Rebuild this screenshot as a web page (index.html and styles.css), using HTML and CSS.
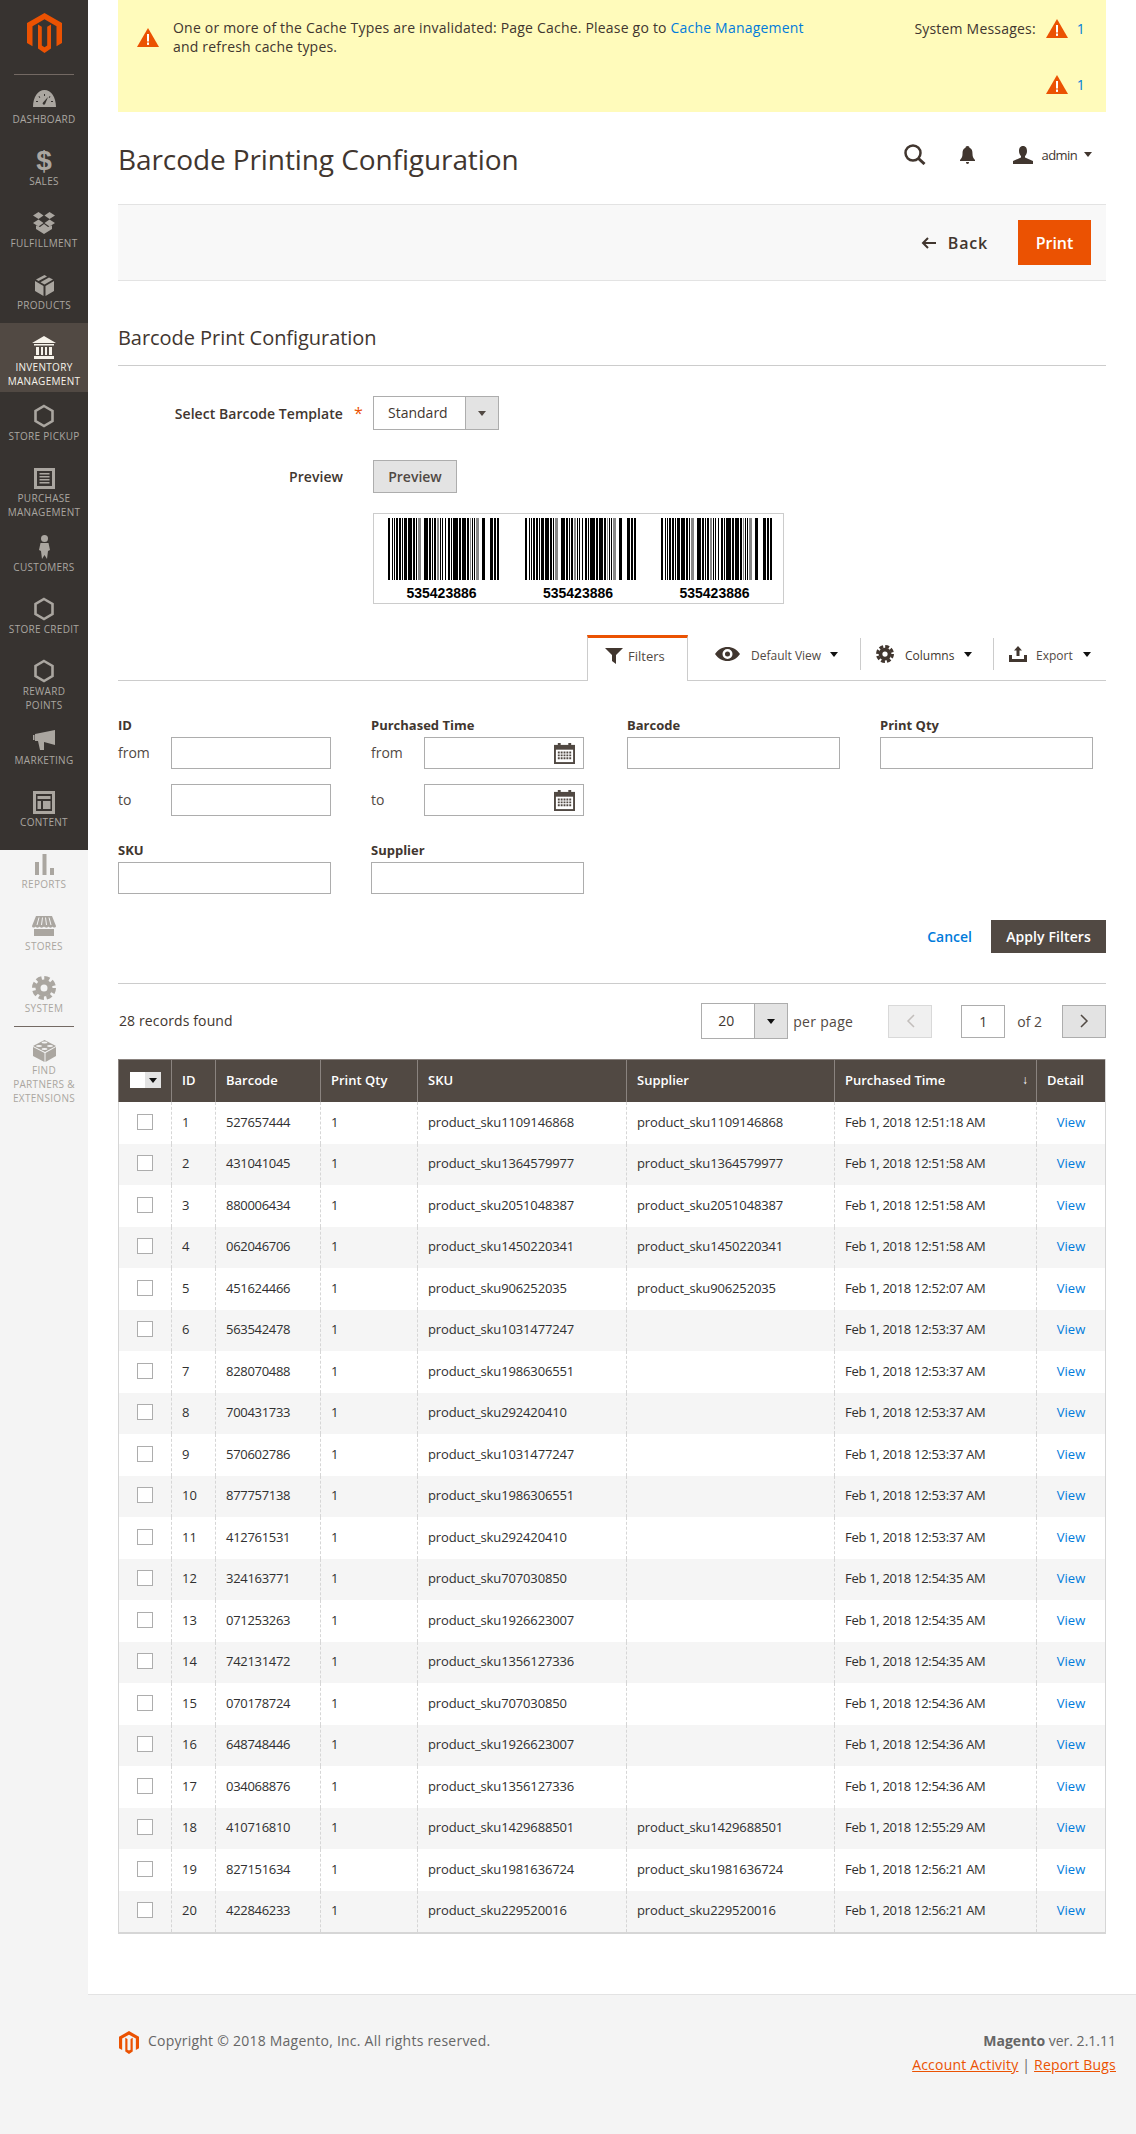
FILE: index.html
```html
<!DOCTYPE html>
<html lang="en">
<head>
  <meta charset="UTF-8">
  <title>Barcode Printing Configuration</title>
  <link rel="stylesheet" href="styles.css">
</head>
<body>
  <!-- shared icons -->
  <svg class="defs" aria-hidden="true">
    <symbol id="logo" viewBox="0 0 35 40">
      <polygon points="17.5,0 35,10 35,30 29.5,33.2 29.5,13.2 17.5,6.3 5.5,13.2 5.5,33.2 0,30 0,10"/>
      <polygon points="24,11.5 20.2,13.7 20.2,32.6 17.5,34.2 14.8,32.6 14.8,13.7 11,11.5 11,35.6 17.5,40 24,35.6"/>
    </symbol>
    <symbol id="warn" viewBox="0 0 22 19">
      <polygon points="11,0 22,19 0,19" fill="#eb5202"/>
      <rect x="10" y="6" width="2" height="7.500" fill="#fff"/>
      <rect x="10" y="14.5" width="2" height="2.400" fill="#fff"/>
    </symbol>
    <symbol id="hexagon" viewBox="0 0 24 24">
      <polygon points="12,2 20.5,7 20.5,17 12,22 3.5,17 3.5,7" fill="none" stroke="currentColor" stroke-width="2.6"/>
    </symbol>
    <symbol id="gear" viewBox="0 0 24 24">
      <circle cx="12" cy="12" r="6" fill="none" stroke="currentColor" stroke-width="5"/>
      <circle cx="12" cy="12" r="10" fill="none" stroke="currentColor" stroke-width="4" stroke-dasharray="5.2 2.65"/>
    </symbol>
    <symbol id="calendar" viewBox="0 0 22 22">
      <rect x="1" y="3" width="20" height="18" fill="none" stroke="#514943" stroke-width="2"/>
      <rect x="1" y="3" width="20" height="4" fill="#514943"/>
      <rect x="4" y="0" width="3" height="5" fill="#514943"/>
      <rect x="15" y="0" width="3" height="5" fill="#514943"/>
      <path d="M4 10h14M4 13h14M4 16h14" stroke="#514943" stroke-width="2" stroke-dasharray="2 1"/>
    </symbol>
    <symbol id="bars" viewBox="0 0 111 62">
      <path d="M0 0h2v62H0zM4 0h1v62H4zM6 0h1v62H6zM8 0h2v62H8zM11 0h2v62h-2zM14 0h1v62h-1zM16 0h3v62h-3zM20 0h4v62h-4zM25 0h2v62h-2zM28 0h1v62h-1zM36 0h4v62h-4zM41 0h2v62h-2zM44 0h1v62h-1zM46 0h2v62h-2zM52 0h1v62h-1zM54 0h1v62h-1zM57 0h1v62h-1zM60 0h2v62h-2zM63 0h1v62h-1zM65 0h5v62h-5zM71 0h2v62h-2zM74 0h4v62h-4zM79 0h2v62h-2zM84 0h1v62h-1zM86 0h1v62h-1zM94 0h3v62h-3zM102 0h3v62h-3zM106 0h2v62h-2zM109 0h2v62h-2z" shape-rendering="crispEdges"/>
      <path d="M30 0h3v62h-3zM49 0h2v62h-2zM82 0h1v62h-1zM88 0h3v62h-3z" fill="#888" shape-rendering="crispEdges"/>
    </symbol>
  </svg>

  <nav class="sidebar">
    <div class="sidebar-dark">
      <div class="logo-block">
        <svg class="logo"><use href="#logo"/></svg>
      </div>
      <a class="nav-item">
        <span class="nav-icon">
          <svg width="23" height="18" viewBox="0 0 23 18"><path d="M0 17C0 7 5 0 11.5 0S23 7 23 17zM11 4v2h1V4zM5.5 6.5l1 1.5 .8-.6-1-1.500zM17.500 6.500l-1 1.500-.8-.6 1-1.500zM3 11v1h2v-1zM18 11v1h2v-1zM15 7l-5 5.500c-1.200 1.300 .8 3 2 1.700z" fill-rule="evenodd"/></svg>
        </span>
        <span class="nav-label">Dashboard</span>
      </a>
      <a class="nav-item">
        <span class="nav-icon nav-dollar">$</span>
        <span class="nav-label">Sales</span>
      </a>
      <a class="nav-item">
        <span class="nav-icon">
          <svg width="22" height="22" viewBox="0 0 22 22"><path d="M5.500 0L10.500 3.500 5.500 7 0 3.500zM16.500 0L22 3.500 16.500 7 11.500 3.500zM5.500 7.500L10.500 11 5.500 14.500 0 11zM16.500 7.500L22 11 16.500 14.500 11.500 11zM11 12L15 15 19 13.500V17L11 22 3 17V13.500L7 15z"/></svg>
        </span>
        <span class="nav-label">Fulfillment</span>
      </a>
      <a class="nav-item">
        <span class="nav-icon">
          <svg width="19" height="21" viewBox="0 0 19 21"><path d="M0 6L8.500 11V21L0 16zM19 6V16L10.500 21V11zM9.500 0L12 1.400 3.500 6 1 4.600zM14 2.600L18 4.600 9.500 9.500 5.500 7.200z"/></svg>
        </span>
        <span class="nav-label">Products</span>
      </a>
      <a class="nav-item nav-item-active">
        <span class="nav-icon">
          <svg width="24" height="23" viewBox="0 0 24 23"><path d="M12 0L24 7H0zM2 8H22V9.500H2zM4 11H7V19H4zM9 11H11V19H9zM13 11H15V19H13zM17 11H20V19H17zM2 20H22V23H2z"/></svg>
        </span>
        <span class="nav-label">Inventory Management</span>
      </a>
      <a class="nav-item">
        <span class="nav-icon"><svg width="24" height="24"><use href="#hexagon"/></svg></span>
        <span class="nav-label">Store Pickup</span>
      </a>
      <a class="nav-item">
        <span class="nav-icon">
          <svg width="21" height="21" viewBox="0 0 21 21"><path d="M0 0H21V21H0zM3 3V18H18V3zM5.500 5H15.500V6.500H5.500zM5.500 8H15.500V9.500H5.500zM5.500 11H15.500V12.500H5.500zM5.500 14H15.500V15.500H5.500z" fill-rule="evenodd"/></svg>
        </span>
        <span class="nav-label">Purchase Management</span>
      </a>
      <a class="nav-item">
        <span class="nav-icon">
          <svg width="11" height="24" viewBox="0 0 11 24"><circle cx="5.500" cy="3.500" r="3.500"/><path d="M1.500 8H9.500L11 15 9 16 8 24 5.500 20 3 24 2 16 0 15z"/></svg>
        </span>
        <span class="nav-label">Customers</span>
      </a>
      <a class="nav-item">
        <span class="nav-icon"><svg width="24" height="24"><use href="#hexagon"/></svg></span>
        <span class="nav-label">Store Credit</span>
      </a>
      <a class="nav-item">
        <span class="nav-icon"><svg width="24" height="24"><use href="#hexagon"/></svg></span>
        <span class="nav-label">Reward Points</span>
      </a>
      <a class="nav-item">
        <span class="nav-icon">
          <svg width="22" height="20" viewBox="0 0 22 20"><path d="M22 0V15L11 12 11 20 7 20 5 11 2 11V4zM0 5H1.500V10H0z"/></svg>
        </span>
        <span class="nav-label">Marketing</span>
      </a>
      <a class="nav-item">
        <span class="nav-icon">
          <svg width="22" height="23" viewBox="0 0 22 23"><path d="M0 0H22V23H0zM3 3V20H19V3zM4.500 5H17.500V8H4.500zM4.500 10H8V18H4.500zM10 10H17.500V18H10z" fill-rule="evenodd"/></svg>
        </span>
        <span class="nav-label">Content</span>
      </a>
    </div>
    <div class="sidebar-light">
      <a class="nav-item nav-item-first">
        <span class="nav-icon">
          <svg width="19" height="21" viewBox="0 0 19 21"><path d="M0 8H4V21H0zM7.500 0H11.500V21H7.500zM15 14H19V21H15z"/></svg>
        </span>
        <span class="nav-label">Reports</span>
      </a>
      <a class="nav-item">
        <span class="nav-icon">
          <svg width="24" height="20" viewBox="0 0 24 20"><path d="M4 0H20L24 10C24 12 21 12 20.500 10.500 20 12 17 12 16.500 10.500 16 12 13 12 12 10.500 11 12 8 12 7.500 10.500 7 12 4 12 3.500 10.500 3 12 0 12 0 10zM2 13H22V20H2z"/><path d="M7 1.500L5 9M10.500 1.500L9.500 9M13.500 1.500L14.500 9M17 1.500L19 9" stroke="#f4f4f4" fill="none"/></svg>
        </span>
        <span class="nav-label">Stores</span>
      </a>
      <a class="nav-item">
        <span class="nav-icon"><svg width="24" height="24"><use href="#gear"/></svg></span>
        <span class="nav-label">System</span>
      </a>
      <div class="nav-divider"></div>
      <a class="nav-item">
        <span class="nav-icon">
          <svg width="23" height="24" viewBox="0 0 23 24"><path d="M0 9L11.500 15V24L0 18zM23 9V18L12.500 24V15z"/><path d="M11.500 2L23 8 12 14 0 8z"/><g fill="#f4f4f4"><ellipse cx="11.500" cy="4.500" rx="3" ry="1"/><ellipse cx="6" cy="8" rx="3" ry="1"/><ellipse cx="17" cy="8" rx="3" ry="1"/><ellipse cx="11.500" cy="11" rx="3" ry="1"/></g></svg>
        </span>
        <span class="nav-label">Find Partners &amp; Extensions</span>
      </a>
    </div>
  </nav>

  <div class="main">
    <div class="page">
      <div class="notice">
        <div class="notice-message">
          <svg class="warn-icon"><use href="#warn"/></svg>
          <p>One or more of the Cache Types are invalidated: Page Cache. Please go to <a href="#">Cache Management</a> and refresh cache types.</p>
        </div>
        <div class="notice-counts">
          <div class="notice-count">
            <span class="notice-count-label">System Messages:</span>
            <svg class="warn-icon"><use href="#warn"/></svg>
            <a href="#">1</a>
          </div>
          <div class="notice-count">
            <svg class="warn-icon"><use href="#warn"/></svg>
            <a href="#">1</a>
          </div>
        </div>
      </div>

      <div class="title-row">
        <h1>Barcode Printing Configuration</h1>
        <div class="user-tools">
          <svg class="search-icon" width="22" height="21" viewBox="0 0 22 21"><circle cx="9" cy="9" r="7.500" fill="none" stroke="#41362f" stroke-width="2.500"/><path d="M14.500 14.500L20.500 20" stroke="#41362f" stroke-width="3"/></svg>
          <svg class="bell-icon" width="15" height="18" viewBox="0 0 15 18"><path d="M7.500 0C9 0 9.500 1 9.500 1.800 12 2.700 12.500 5 12.500 8 12.500 11 13.500 12.500 15 14V15H0V14C1.500 12.500 2.500 11 2.500 8 2.500 5 3 2.700 5.500 1.800 5.500 1 6 0 7.500 0zM6 16H9C9 17 8.500 18 7.500 18S6 17 6 16z" fill="#41362f"/></svg>
          <svg class="user-icon" width="20" height="18" viewBox="0 0 20 18"><path d="M10 0C13 0 14 2.500 14 5 14 7.500 13 9 12 10V11.500L20 15V18H0V15L8 11.500V10C7 9 6 7.500 6 5 6 2.500 7 0 10 0z" fill="#41362f"/></svg>
          <span class="user-name">admin</span>
          <span class="caret caret-dark"></span>
        </div>
      </div>

      <div class="action-bar">
        <a class="back-link">
          <svg width="15" height="12" viewBox="0 0 15 12"><path d="M15 6H2M7 1L2 6 7 11" fill="none" stroke="#41362f" stroke-width="2"/></svg>
          Back
        </a>
        <button class="btn-print">Print</button>
      </div>

      <h2 class="section-title">Barcode Print Configuration</h2>

      <div class="config-row">
        <label class="config-label">Select Barcode Template</label>
        <span class="config-star">*</span>
        <div class="select-box select-template">
          <span class="select-value">Standard</span>
          <span class="select-arrow"><span class="caret"></span></span>
        </div>
      </div>
      <div class="config-row config-row-preview">
        <label class="config-label">Preview</label>
        <span class="config-star"></span>
        <button class="btn-grey">Preview</button>
      </div>
      <div class="barcode-box">
        <div class="barcode">
          <svg width="111" height="62"><use href="#bars"/></svg>
          <span>535423886</span>
        </div>
        <div class="barcode">
          <svg width="111" height="62"><use href="#bars"/></svg>
          <span>535423886</span>
        </div>
        <div class="barcode">
          <svg width="111" height="62"><use href="#bars"/></svg>
          <span>535423886</span>
        </div>
      </div>

      <div class="grid-tools">
        <a class="tab-filters">
          <svg width="18" height="16" viewBox="0 0 18 16"><path d="M0 0H18L11 7V16L7 13V7z" fill="#41362f"/></svg>
          Filters
        </a>
        <a class="tool tool-view">
          <svg width="25" height="14" viewBox="0 0 25 14"><path d="M0 7C3 2.500 7.500 0 12.500 0S22 2.500 25 7C22 11.500 17.500 14 12.500 14S3 11.500 0 7zM12.500 2A5 5 0 1 0 12.500 12 5 5 0 1 0 12.500 2zM12.500 4.500A2.500 2.500 0 1 1 12.500 9.500 2.500 2.500 0 1 1 12.500 4.500z" fill="#41362f" fill-rule="evenodd"/></svg>
          <span class="tool-label">Default View</span>
          <span class="caret caret-black"></span>
        </a>
        <a class="tool tool-columns">
          <svg class="tool-gear" width="18" height="18"><use href="#gear"/></svg>
          <span class="tool-label">Columns</span>
          <span class="caret caret-black"></span>
        </a>
        <a class="tool tool-export">
          <svg width="18" height="16" viewBox="0 0 18 16"><path d="M9 0L13 4.500H10.500V10H7.500V4.500H5zM0 9H3V13H15V9H18V16H0z" fill="#41362f"/></svg>
          <span class="tool-label">Export</span>
          <span class="caret caret-black"></span>
        </a>
      </div>

      <div class="filters">
        <div class="filter-col">
          <div class="filter-label">ID</div>
          <div class="range-row"><span class="range-label">from</span><input class="text-input range-input" type="text"></div>
          <div class="range-row"><span class="range-label">to</span><input class="text-input range-input" type="text"></div>
        </div>
        <div class="filter-col">
          <div class="filter-label">Purchased Time</div>
          <div class="range-row">
            <span class="range-label">from</span>
            <div class="date-box"><svg width="21" height="21"><use href="#calendar"/></svg></div>
          </div>
          <div class="range-row">
            <span class="range-label">to</span>
            <div class="date-box"><svg width="21" height="21"><use href="#calendar"/></svg></div>
          </div>
        </div>
        <div class="filter-col">
          <div class="filter-label">Barcode</div>
          <input class="text-input" type="text">
        </div>
        <div class="filter-col">
          <div class="filter-label">Print Qty</div>
          <input class="text-input" type="text">
        </div>
        <div class="filter-col filter-second-row">
          <div class="filter-label">SKU</div>
          <input class="text-input" type="text">
        </div>
        <div class="filter-col filter-second-row">
          <div class="filter-label">Supplier</div>
          <input class="text-input" type="text">
        </div>
      </div>

      <div class="filter-actions">
        <a class="cancel-link" href="#">Cancel</a>
        <button class="btn-apply">Apply Filters</button>
      </div>

      <div class="pager">
        <span class="records">28 records found</span>
        <div class="select-box select-perpage">
          <span class="select-value">20</span>
          <span class="select-arrow"><span class="caret caret-black"></span></span>
        </div>
        <span class="per-page">per page</span>
        <button class="page-btn page-btn-disabled">
          <svg width="9" height="14" viewBox="0 0 9 14"><path d="M8 1L2 7 8 13" fill="none" stroke="#c2bebb" stroke-width="1.500"/></svg>
        </button>
        <input class="page-input" type="text" value="1">
        <span class="page-total">of 2</span>
        <button class="page-btn">
          <svg width="9" height="14" viewBox="0 0 9 14"><path d="M1 1L7 7 1 13" fill="none" stroke="#514943" stroke-width="1.500"/></svg>
        </button>
      </div>

      <table class="grid">
        <colgroup>
          <col class="col-check"><col class="col-id"><col class="col-barcode"><col class="col-qty">
          <col class="col-sku"><col class="col-supplier"><col class="col-time"><col class="col-detail">
        </colgroup>
        <thead>
          <tr>
            <th class="check-cell"><span class="mass-check"><span class="mass-box"></span><span class="mass-arrow"><span class="caret caret-black"></span></span></span></th>
            <th>ID</th><th>Barcode</th><th>Print Qty</th><th>SKU</th><th>Supplier</th>
            <th>Purchased Time<span class="sort-arrow">↓</span></th>
            <th>Detail</th>
          </tr>
        </thead>
        <tbody>
          <tr><td class="check-cell"><span class="checkbox"></span></td><td>1</td><td>527657444</td><td>1</td><td>product_sku1109146868</td><td>product_sku1109146868</td><td>Feb 1, 2018 12:51:18 AM</td><td class="view-cell"><a href="#">View</a></td></tr>
          <tr><td class="check-cell"><span class="checkbox"></span></td><td>2</td><td>431041045</td><td>1</td><td>product_sku1364579977</td><td>product_sku1364579977</td><td>Feb 1, 2018 12:51:58 AM</td><td class="view-cell"><a href="#">View</a></td></tr>
          <tr><td class="check-cell"><span class="checkbox"></span></td><td>3</td><td>880006434</td><td>1</td><td>product_sku2051048387</td><td>product_sku2051048387</td><td>Feb 1, 2018 12:51:58 AM</td><td class="view-cell"><a href="#">View</a></td></tr>
          <tr><td class="check-cell"><span class="checkbox"></span></td><td>4</td><td>062046706</td><td>1</td><td>product_sku1450220341</td><td>product_sku1450220341</td><td>Feb 1, 2018 12:51:58 AM</td><td class="view-cell"><a href="#">View</a></td></tr>
          <tr><td class="check-cell"><span class="checkbox"></span></td><td>5</td><td>451624466</td><td>1</td><td>product_sku906252035</td><td>product_sku906252035</td><td>Feb 1, 2018 12:52:07 AM</td><td class="view-cell"><a href="#">View</a></td></tr>
          <tr><td class="check-cell"><span class="checkbox"></span></td><td>6</td><td>563542478</td><td>1</td><td>product_sku1031477247</td><td></td><td>Feb 1, 2018 12:53:37 AM</td><td class="view-cell"><a href="#">View</a></td></tr>
          <tr><td class="check-cell"><span class="checkbox"></span></td><td>7</td><td>828070488</td><td>1</td><td>product_sku1986306551</td><td></td><td>Feb 1, 2018 12:53:37 AM</td><td class="view-cell"><a href="#">View</a></td></tr>
          <tr><td class="check-cell"><span class="checkbox"></span></td><td>8</td><td>700431733</td><td>1</td><td>product_sku292420410</td><td></td><td>Feb 1, 2018 12:53:37 AM</td><td class="view-cell"><a href="#">View</a></td></tr>
          <tr><td class="check-cell"><span class="checkbox"></span></td><td>9</td><td>570602786</td><td>1</td><td>product_sku1031477247</td><td></td><td>Feb 1, 2018 12:53:37 AM</td><td class="view-cell"><a href="#">View</a></td></tr>
          <tr><td class="check-cell"><span class="checkbox"></span></td><td>10</td><td>877757138</td><td>1</td><td>product_sku1986306551</td><td></td><td>Feb 1, 2018 12:53:37 AM</td><td class="view-cell"><a href="#">View</a></td></tr>
          <tr><td class="check-cell"><span class="checkbox"></span></td><td>11</td><td>412761531</td><td>1</td><td>product_sku292420410</td><td></td><td>Feb 1, 2018 12:53:37 AM</td><td class="view-cell"><a href="#">View</a></td></tr>
          <tr><td class="check-cell"><span class="checkbox"></span></td><td>12</td><td>324163771</td><td>1</td><td>product_sku707030850</td><td></td><td>Feb 1, 2018 12:54:35 AM</td><td class="view-cell"><a href="#">View</a></td></tr>
          <tr><td class="check-cell"><span class="checkbox"></span></td><td>13</td><td>071253263</td><td>1</td><td>product_sku1926623007</td><td></td><td>Feb 1, 2018 12:54:35 AM</td><td class="view-cell"><a href="#">View</a></td></tr>
          <tr><td class="check-cell"><span class="checkbox"></span></td><td>14</td><td>742131472</td><td>1</td><td>product_sku1356127336</td><td></td><td>Feb 1, 2018 12:54:35 AM</td><td class="view-cell"><a href="#">View</a></td></tr>
          <tr><td class="check-cell"><span class="checkbox"></span></td><td>15</td><td>070178724</td><td>1</td><td>product_sku707030850</td><td></td><td>Feb 1, 2018 12:54:36 AM</td><td class="view-cell"><a href="#">View</a></td></tr>
          <tr><td class="check-cell"><span class="checkbox"></span></td><td>16</td><td>648748446</td><td>1</td><td>product_sku1926623007</td><td></td><td>Feb 1, 2018 12:54:36 AM</td><td class="view-cell"><a href="#">View</a></td></tr>
          <tr><td class="check-cell"><span class="checkbox"></span></td><td>17</td><td>034068876</td><td>1</td><td>product_sku1356127336</td><td></td><td>Feb 1, 2018 12:54:36 AM</td><td class="view-cell"><a href="#">View</a></td></tr>
          <tr><td class="check-cell"><span class="checkbox"></span></td><td>18</td><td>410716810</td><td>1</td><td>product_sku1429688501</td><td>product_sku1429688501</td><td>Feb 1, 2018 12:55:29 AM</td><td class="view-cell"><a href="#">View</a></td></tr>
          <tr><td class="check-cell"><span class="checkbox"></span></td><td>19</td><td>827151634</td><td>1</td><td>product_sku1981636724</td><td>product_sku1981636724</td><td>Feb 1, 2018 12:56:21 AM</td><td class="view-cell"><a href="#">View</a></td></tr>
          <tr><td class="check-cell"><span class="checkbox"></span></td><td>20</td><td>422846233</td><td>1</td><td>product_sku229520016</td><td>product_sku229520016</td><td>Feb 1, 2018 12:56:21 AM</td><td class="view-cell"><a href="#">View</a></td></tr>
        </tbody>
      </table>
    </div>

    <footer class="footer">
      <div class="footer-left">
        <svg class="footer-logo"><use href="#logo"/></svg>
        <span>Copyright © 2018 Magento, Inc. All rights reserved.</span>
      </div>
      <div class="footer-right">
        <div class="footer-version"><strong>Magento</strong> ver. 2.1.11</div>
        <div class="footer-links"><a href="#">Account Activity</a> | <a href="#">Report Bugs</a></div>
      </div>
    </footer>
  </div>
</body>
</html>
```

FILE: styles.css
```css
* {
  box-sizing: border-box;
}
body {
  margin: 0;
  min-height: 2134px;
  display: flex;
  font-family: "Open Sans", sans-serif;
  font-size: 14px;
  color: #41362f;
  background: #fff;
}
a {
  text-decoration: none;
}
button {
  font-family: inherit;
  cursor: pointer;
}
.defs {
  display: none;
}

/* Sidebar */
.sidebar {
  width: 88px;
  flex: none;
  background: #f4f4f4;
  color: #aaa6a0;
}
.sidebar-dark {
  height: 850px;
  background: #373330;
}
.logo-block {
  height: 75px;
  width: 60px;
  margin: 0 auto;
  padding-top: 13px;
  border-bottom: 1px solid #736963;
  text-align: center;
}
.logo {
  width: 35px;
  height: 40px;
  fill: #eb5202;
}
.nav-item {
  display: flex;
  flex-direction: column;
  align-items: center;
  min-height: 62px;
  padding: 12px 0 4px;
  color: #aaa6a0;
  fill: #aaa6a0;
}
.nav-item-active {
  background: #514943;
  color: #f7f3eb;
  fill: #f7f3eb;
}
.nav-item-first {
  min-height: 52px;
  padding-top: 2px;
}
.nav-icon {
  height: 24px;
  margin-bottom: 1px;
  display: flex;
  align-items: center;
  justify-content: center;
}
.nav-dollar {
  font-family: "Liberation Sans", sans-serif;
  font-size: 28px;
  font-weight: bold;
}
.nav-label {
  max-width: 76px;
  font-size: 10px;
  line-height: 14px;
  letter-spacing: .3px;
  text-transform: uppercase;
  text-align: center;
}
.nav-divider {
  width: 60px;
  height: 1px;
  margin: 0 auto -1px;
  background: #736963;
}

/* Main column */
.main {
  flex: 1;
  min-width: 0;
  display: flex;
  flex-direction: column;
}
.page {
  padding: 0 30px;
  height: 1994px;
}

/* Yellow notice */
.notice {
  height: 112px;
  display: flex;
  justify-content: space-between;
  background: #fffbbb;
  padding: 0 21px 0 19px;
  color: #41362f;
  letter-spacing: .2px;
}
.notice a {
  color: #007bdb;
}
.notice-message {
  display: flex;
  padding-top: 18px;
}
.notice-message .warn-icon {
  margin: 10px 14px 0 0;
}
.notice-message p {
  margin: 0;
  max-width: 640px;
  line-height: 19px;
}
.warn-icon {
  width: 22px;
  height: 19px;
  flex: none;
}
.notice-counts {
  display: flex;
  flex-direction: column;
  align-items: flex-end;
}
.notice-count {
  height: 56px;
  display: flex;
  align-items: center;
}
.notice-count .warn-icon {
  margin-right: 9px;
}
.notice-count-label {
  margin-right: 10px;
}

/* Title row */
.title-row {
  height: 92px;
  display: flex;
  justify-content: space-between;
  align-items: center;
  padding-right: 14px;
}
h1 {
  margin: 2px 0 0;
  font-size: 28px;
  font-weight: 400;
  letter-spacing: -.09px;
  color: #41362f;
}
.user-tools {
  display: flex;
  align-items: center;
  margin-top: -7px;
}
.bell-icon {
  margin-left: 34px;
}
.user-icon {
  margin-left: 38px;
}
.user-name {
  margin-left: 9px;
  font-size: 13px;
  letter-spacing: -.6px;
}
.caret {
  display: inline-block;
  width: 0;
  height: 0;
  border-left: 4px solid transparent;
  border-right: 4px solid transparent;
  border-top: 5px solid #514943;
}
.caret-dark {
  margin-left: 7px;
  border-top-color: #41362f;
}
.caret-black {
  border-top-color: #111;
}

/* Action bar */
.action-bar {
  height: 77px;
  display: flex;
  justify-content: flex-end;
  align-items: center;
  padding: 0 15px;
  background: #f8f8f8;
  border-top: 1px solid #e3e3e3;
  border-bottom: 1px solid #e3e3e3;
}
.back-link {
  display: flex;
  align-items: center;
  gap: 12px;
  margin-right: 30px;
  font-size: 16px;
  font-weight: 600;
  letter-spacing: .8px;
  color: #41362f;
}
.btn-print {
  width: 73px;
  height: 45px;
  border: 0;
  background: #eb5202;
  color: #fff;
  font-size: 16px;
  font-weight: 600;
}

/* Config form */
.section-title {
  margin: 0;
  padding: 42px 0 12px;
  font-size: 20px;
  font-weight: 400;
  letter-spacing: -.05px;
  line-height: 30px;
  border-bottom: 1px solid #ccc;
}
.config-row {
  display: flex;
  align-items: center;
  margin-top: 30px;
}
.config-label {
  width: 225px;
  text-align: right;
  font-weight: 600;
  letter-spacing: .06px;
}
.config-star {
  width: 30px;
  padding-left: 11px;
  color: #eb5202;
  font-size: 16px;
}
.select-box {
  display: flex;
  border: 1px solid #adadad;
  background: #fff;
}
.select-template {
  width: 126px;
  height: 34px;
}
.select-value {
  flex: 1;
  padding-left: 14px;
  line-height: 32px;
}
.select-arrow {
  display: flex;
  align-items: center;
  justify-content: center;
  width: 33px;
  background: #e3e3e3;
  border-left: 1px solid #adadad;
}
.btn-grey {
  width: 84px;
  height: 33px;
  background: #e3e3e3;
  border: 1px solid #adadad;
  color: #514943;
  font-size: 14px;
  font-weight: 600;
}
.barcode-box {
  width: 411px;
  height: 91px;
  margin: 20px 0 0 255px;
  padding: 4px 11px 0 14px;
  display: flex;
  justify-content: space-between;
  border: 1px solid #ccc;
}
.barcode {
  width: 111px;
  display: flex;
  flex-direction: column;
  align-items: center;
  color: #000;
}
.barcode svg {
  display: block;
}
.barcode span {
  font-family: "Liberation Sans", sans-serif;
  font-size: 14px;
  font-weight: bold;
  line-height: 20px;
  margin: 3px 4px 0 0;
}

/* Grid toolbar */
.grid-tools {
  height: 46px;
  margin-top: 31px;
  display: flex;
  justify-content: flex-end;
  align-items: flex-start;
  padding-right: 15px;
  border-bottom: 1px solid #ccc;
  font-size: 12px;
  color: #514943;
}
.tab-filters {
  width: 101px;
  height: 46px;
  display: flex;
  align-items: center;
  gap: 5px;
  padding: 0 0 7px 17px;
  margin-right: 27px;
  background: #fff;
  border: 1px solid #ccc;
  border-top: 3px solid #eb5202;
  border-bottom: 0;
  font-size: 13px;
}
.tool {
  height: 32px;
  margin-top: 3px;
  display: flex;
  align-items: center;
}
.tool-label {
  padding-top: 2px;
}
.tool-view {
  width: 145px;
}
.tool-view .tool-label {
  margin: 0 9px 0 11px;
}
.tool-columns {
  width: 133px;
  padding-left: 15px;
  border-left: 1px solid #ccc;
  color: #41362f;
}
.tool-gear {
  color: #41362f;
}
.tool-columns .tool-label {
  margin: 0 10px 0 11px;
}
.tool-export {
  width: 98px;
  padding-left: 15px;
  border-left: 1px solid #ccc;
}
.tool-export .tool-label {
  margin: 0 10px 0 9px;
}

/* Filters */
.filters {
  display: grid;
  grid-template-columns: 253px 256px 253px 213px;
  padding-top: 34px;
}
.filter-label {
  line-height: 20px;
  margin-bottom: 2px;
  font-size: 13px;
  font-weight: 700;
}
.filter-col {
  width: 213px;
}
.filter-second-row {
  margin-top: 24px;
}
.text-input {
  display: block;
  width: 100%;
  height: 32px;
  border: 1px solid #adadad;
  background: #fff;
}
.range-row {
  display: flex;
  align-items: center;
  margin-bottom: 15px;
}
.range-row:last-child {
  margin-bottom: 0;
}
.range-label {
  width: 53px;
  padding-bottom: 2px;
  color: #514943;
}
.range-input {
  width: 160px;
}
.date-box {
  width: 160px;
  height: 32px;
  display: flex;
  align-items: center;
  justify-content: flex-end;
  padding-right: 8px;
  border: 1px solid #adadad;
}
.filter-actions {
  height: 64px;
  margin-top: 26px;
  display: flex;
  justify-content: flex-end;
  align-items: flex-start;
  border-bottom: 1px solid #ccc;
}
.cancel-link {
  margin-right: 19px;
  line-height: 33px;
  color: #007bdb;
  font-weight: 600;
}
.btn-apply {
  width: 115px;
  height: 33px;
  border: 0;
  background: #514943;
  color: #fff;
  font-size: 14px;
  font-weight: 600;
  letter-spacing: .1px;
}

/* Pager */
.pager {
  height: 36px;
  margin-top: 19px;
  display: flex;
  align-items: center;
}
.records {
  margin-right: auto;
  padding: 0 0 2px 1px;
  letter-spacing: .12px;
}
.select-perpage {
  width: 87px;
  height: 36px;
}
.select-perpage .select-value {
  padding-left: 16px;
  line-height: 34px;
}
.per-page {
  margin: 0 35px 0 5px;
  letter-spacing: .3px;
  color: #514943;
}
.page-btn {
  width: 44px;
  height: 33px;
  display: flex;
  align-items: center;
  justify-content: center;
  background: #e3e3e3;
  border: 1px solid #adadad;
}
.page-btn-disabled {
  background: #f0f0f0;
  border-color: #d9d9d9;
}
.page-input {
  width: 44px;
  height: 33px;
  margin-left: 29px;
  border: 1px solid #adadad;
  font-family: inherit;
  font-size: 14px;
  color: #41362f;
  text-align: center;
}
.page-total {
  margin: 0 20px 0 12px;
  color: #514943;
}

/* Grid */
.grid {
  width: 988px;
  margin-top: 20px;
  table-layout: fixed;
  border-collapse: separate;
  border-spacing: 0;
  border-right: 1px solid #d6d6d6;
  border-bottom: 2px solid #d6d6d6;
}
.col-check { width: 53px; }
.col-id { width: 44px; }
.col-barcode { width: 105px; }
.col-qty { width: 97px; }
.col-sku { width: 209px; }
.col-supplier { width: 208px; }
.col-time { width: 202px; }
.col-detail { width: 69px; }
.grid th {
  height: 43px;
  padding: 0 0 2px 10px;
  background: #514943;
  border-top: 1px solid #8a837f;
  border-left: 1px solid #8a837f;
  color: #fff;
  font-size: 13px;
  font-weight: 600;
  text-align: left;
}
.grid td {
  height: 41.5px;
  padding: 0 0 2px 10px;
  border-left: 1px dashed #d6d6d6;
  font-size: 13px;
  color: #303030;
}
.grid td:nth-child(3),
.grid td:nth-child(7) {
  letter-spacing: -.3px;
}
.grid td:nth-child(5),
.grid td:nth-child(6) {
  letter-spacing: -.13px;
}
.grid tbody tr:nth-child(even) td {
  background: #f5f5f5;
}
.grid td.check-cell {
  border-left: 1px solid #d6d6d6;
}
.grid .check-cell {
  padding: 0 0 2px;
  text-align: center;
}
.grid .view-cell {
  padding: 0 0 2px;
  text-align: center;
}
.view-cell a {
  color: #007bdb;
}
.checkbox {
  display: block;
  width: 16px;
  height: 16px;
  margin: 0 auto;
  border: 1px solid #adadad;
  background: #fff;
}
.mass-check {
  display: flex;
  width: 31px;
  height: 16px;
  margin: 0 auto;
}
.mass-box {
  width: 15px;
  background: #fff;
}
.mass-arrow {
  width: 16px;
  display: flex;
  align-items: center;
  justify-content: center;
  background: #e3e3e3;
}
.sort-arrow {
  float: right;
  padding-right: 8px;
  font-size: 12px;
  font-weight: 400;
}

/* Footer */
.footer {
  flex: 1;
  display: flex;
  justify-content: space-between;
  align-items: flex-start;
  padding: 36px 20px 0 31px;
  background: #f4f4f4;
  border-top: 1px solid #e3e3e3;
  color: #666;
}
.footer-left {
  display: flex;
  align-items: flex-start;
  gap: 9px;
}
.footer-left span {
  line-height: 20px;
  letter-spacing: .23px;
}
.footer-logo {
  width: 20px;
  height: 23px;
  fill: #eb5202;
}
.footer-right {
  text-align: right;
}
.footer-version {
  line-height: 20px;
}
.footer-links {
  margin-top: 4px;
  line-height: 20px;
  letter-spacing: .2px;
}
.footer-links a {
  color: #eb5202;
  text-decoration: underline;
}
```
